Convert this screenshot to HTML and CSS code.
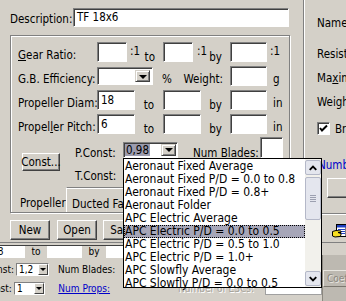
FILE: index.html
```html
<!DOCTYPE html>
<html lang="en">
<head>
  <meta charset="UTF-8">
  <meta name="viewport" content="width=device-width, initial-scale=1.0">
  <title>Propeller</title>
  <link rel="stylesheet" href="styles.css">
</head>
<body>
  <div class="screen">
    <div class="dialog">
      <div class="left">
        <div class="desc-row">
          <span class="desc-lbl">Description:</span>
          <span class="field desc">TF 18x6</span>
        </div>
        <div class="group">
          <div class="row">
            <span class="lbl"><u>G</u>ear Ratio:</span>
            <span class="field w30"></span>
            <span class="gap g36"><span class="sup">:1</span><span class="sub">to</span></span>
            <span class="field w30"></span>
            <span class="gap g37"><span class="sup">:1</span><span class="sub">by</span></span>
            <span class="field w37"></span>
            <span class="unit sup">:1</span>
          </div>
          <div class="row">
            <span class="lbl">G.B. Efficiency:</span>
            <span class="combo w56"><span class="combo-val"></span><span class="drop"></span></span>
            <span class="mid"><span>%</span><span>Weight:</span></span>
            <span class="field w37"></span>
            <span class="unit">g</span>
          </div>
          <div class="row">
            <span class="lbl">Propeller Diam:</span>
            <span class="field w38">18</span>
            <span class="gap g28"><span class="sub">to</span></span>
            <span class="field w38"></span>
            <span class="gap g29"><span class="sub">by</span></span>
            <span class="field w37"></span>
            <span class="unit">in</span>
          </div>
          <div class="row">
            <span class="lbl">Propel<u>l</u>er Pitch:</span>
            <span class="field w38">6</span>
            <span class="gap g28"><span class="sub">to</span></span>
            <span class="field w38"></span>
            <span class="gap g29"><span class="sub">by</span></span>
            <span class="field w37"></span>
            <span class="unit">in</span>
          </div>
          <div class="consts">
            <span class="btn const">Const...</span>
            <div class="const-col">
              <div class="pc-row">
                <span class="clbl">P.Const:</span>
                <span class="combo w55"><span class="combo-val"><span class="sel">0,98</span></span><span class="drop"></span></span>
                <span class="nb">Num Blades:</span>
                <span class="field nbf"></span>
              </div>
              <div class="tc-row"><span class="clbl">T.Const:</span></div>
            </div>
          </div>
          <div class="tabs">
            <span class="tab on">Propeller</span>
            <span class="tab">Ducted Fan</span>
          </div>
        </div>
        <div class="buttons">
          <span class="btn">New</span>
          <span class="btn">Open</span>
          <span class="btn">Save</span>
        </div>
      </div>
      <div class="right">
        <p class="rl name">Name:</p>
        <p class="rl resist">Resistance:</p>
        <p class="rl">Ma<u>x</u>imum Current:</p>
        <p class="rl">Weight:</p>
        <div class="chk">
          <span class="box">
            <svg width="9" height="9" viewBox="0 0 9 9"><polyline points="1,4 3,6.5 8,1.5" fill="none" stroke="#000" stroke-width="2"/></svg>
          </span>
          <span>Brushless</span>
        </div>
        <p class="link">Number of Cells</p>
        <span class="btn rbtn">Load</span>
        <div class="rsep"></div>
        <svg class="icon" width="15" height="17" viewBox="0 0 15 17">
          <rect x="4.5" y="1.5" width="9.5" height="12" fill="#fff" stroke="#000"/>
          <rect x="5" y="2" width="9" height="2.5" fill="#2040c0"/>
          <line x1="6" y1="6.5" x2="13" y2="6.5" stroke="#2040c0"/>
          <line x1="6" y1="8.5" x2="13" y2="8.5" stroke="#2040c0"/>
          <line x1="6" y1="10.5" x2="13" y2="10.5" stroke="#2040c0"/>
          <path d="M0.5 8.5 L4 7.5 L9 8 L9 9.5 L6 9.5 L9 10.5 L9 12 L8 13.5 L3 14 L0.5 13 Z" fill="#f8e020" stroke="#000"/>
        </svg>
      </div>
    </div>
    <div class="back">
      <div class="back-main">
        <div class="brow r1">
          <span class="bfield b1">18</span>
          <span class="bcell c23">to</span>
          <span class="bfield b34"></span>
          <span class="bcell c25">by</span>
          <span class="bfield b60"></span>
        </div>
        <div class="brow r2">
          <span class="bl">P.Const:</span>
          <span class="bcombo">1,2<span class="bdrop"></span></span>
          <span class="bt">Num Blades:</span>
          <span class="bfield b30"></span>
        </div>
        <div class="brow r3">
          <span class="bl">T.Const:</span>
          <span class="bcombo">1<span class="bdrop"></span></span>
          <span class="blink">Num Props:</span>
          <span class="grey">Number of ESCs:</span>
          <span class="bfield b60"></span>
        </div>
      </div>
      <div class="back-side">
        <span class="coeff">Coefficients</span>
      </div>
    </div>
    <div class="droplist">
      <div class="items">
        <div class="item">Aeronaut Fixed Average</div>
        <div class="item">Aeronaut Fixed P/D = 0.0 to 0.8</div>
        <div class="item">Aeronaut Fixed P/D = 0.8+</div>
        <div class="item">Aeronaut Folder</div>
        <div class="item">APC Electric Average</div>
        <div class="item current">APC Electric P/D = 0.0 to 0.5</div>
        <div class="item">APC Electric P/D = 0.5 to 1.0</div>
        <div class="item">APC Electric P/D = 1.0+</div>
        <div class="item">APC Slowfly Average</div>
        <div class="item">APC Slowfly P/D = 0.0 to 0.5</div>
      </div>
      <div class="sbar">
        <span class="sb-btn">
          <svg width="15" height="14" viewBox="0 0 15 14"><polyline points="4,9 7.5,5.5 11,9" fill="none" stroke="#000" stroke-width="2"/></svg>
        </span>
        <span class="thumb"><span class="grip"></span></span>
        <span class="sb-btn down">
          <svg width="15" height="14" viewBox="0 0 15 14"><polyline points="4,5 7.5,8.5 11,5" fill="none" stroke="#000" stroke-width="2"/></svg>
        </span>
      </div>
    </div>
  </div>
</body>
</html>
```

FILE: styles.css
```css
* {
  padding: 0;
  margin: 0;
  box-sizing: border-box;
}
html, body {
  width: 346px;
  height: 301px;
  overflow: hidden;
}
body {
  background: #d4d0c8;
  color: #000;
  font: 11.5px/14px "DejaVu Sans Condensed", "DejaVu Sans", sans-serif;
  font-stretch: condensed;
}

.screen {
  position: relative;
  width: 346px;
  height: 301px;
  overflow: hidden;
  white-space: nowrap;
}
.dialog {
  display: flex;
  height: 242px;
}
.left {
  width: 303px;
}

/* classic sunken / raised bits */
.field {
  display: block;
  height: 20px;
  padding: 2px 0 0 3px;
  background: #fff;
  border: 1px solid;
  border-color: #808080 #fff #fff #808080;
  box-shadow: inset 1px 1px #404040;
}
.btn {
  display: flex;
  align-items: center;
  justify-content: center;
  background: #d4d0c8;
  border: 1px solid;
  border-color: #fff #404040 #404040 #fff;
  box-shadow: inset -1px -1px #808080;
}
.combo {
  display: flex;
  height: 18px;
  padding: 2px;
  background: #fff;
  border: 1px solid;
  border-color: #808080 #fff #fff #808080;
  box-shadow: inset 1px 1px #404040;
}
.combo-val {
  flex: 1;
  line-height: 12px;
}
.drop {
  position: relative;
  width: 15px;
  background: #d4d0c8;
  border: 1px solid;
  border-color: #d4d0c8 #404040 #404040 #d4d0c8;
  box-shadow: inset 1px 1px #fff, inset -1px -1px #808080;
}
.drop::after {
  content: "";
  position: absolute;
  left: 3px;
  top: 4px;
  border-top: 4px solid #000;
  border-left: 4px solid transparent;
  border-right: 4px solid transparent;
}

.w30 { width: 30px; }
.w37 { width: 37px; }
.w38 { width: 38px; }
.w55 { width: 55px; }
.w56 { width: 56px; }

/* description */
.desc-row {
  display: flex;
  align-items: center;
  padding: 8px 0 0 10px;
}
.desc-lbl {
  width: 63px;
  margin-top: 3px;
}
.desc {
  width: 216px;
  height: 19px;
  padding-top: 1px;
}

/* group box */
.group {
  display: flex;
  flex-direction: column;
  width: 280px;
  height: 178px;
  margin: 8px 0 0 10px;
  padding: 6px 0 0 7px;
  border: 1px solid #808080;
  box-shadow: inset 1px 1px #fff, 1px 1px #fff;
}
.row {
  display: flex;
  height: 20px;
  margin-bottom: 4px;
}
.lbl {
  width: 79px;
  align-self: flex-end;
  margin-bottom: 0;
}
.gap {
  display: flex;
  justify-content: center;
}
.g36, .g37 { justify-content: space-between; padding: 0 8px 0 3px; }
.g36 { width: 36px; }
.g37 { width: 37px; padding-left: 4px; }
.g28 { width: 28px; }
.g29 { width: 29px; }
.sup {
  align-self: flex-start;
  margin-top: 2px;
}
.sub {
  align-self: flex-end;
  margin-bottom: -2px;
}
.unit {
  margin-left: 6px;
  align-self: flex-end;
  margin-bottom: 0;
}
.unit.sup {
  margin-left: 3px;
  align-self: flex-start;
}
.row .combo {
  align-self: center;
}
.mid {
  display: flex;
  justify-content: space-between;
  width: 77px;
  padding: 0 7px 0 9px;
  align-self: flex-end;
  margin-bottom: 0;
}

/* constants */
.consts {
  display: flex;
  margin-top: -1px;
  height: 50px;
}
.const {
  width: 38px;
  height: 18px;
  margin: 16px 0 0 4px;
}
.const-col {
  margin-left: 15px;
}
.pc-row {
  display: flex;
  align-items: flex-end;
  height: 21px;
}
.clbl {
  width: 48px;
  margin-bottom: -2px;
}
.pc-row .combo {
  height: 16px;
  padding: 1px;
}
.sel {
  display: inline-block;
  padding: 0 1px;
  background: #9c9cae;
}
.pc-row .drop::after {
  top: 3px;
}
.nb {
  margin: 0 0 -2px 15px;
  width: 67px;
}
.nbf {
  width: 23px;
  height: 21px;
}
.tc-row {
  margin-top: 11px;
}

/* tabs */
.tabs {
  display: flex;
  margin: auto 0 0 -7px;
  height: 25px;
}
.tab {
  padding: 9px 0 0 9px;
  width: 55px;
}
.tab + .tab {
  width: 90px;
  padding-left: 5px;
  border-top: 1px solid #808080;
  border-left: 1px solid #fff;
  box-shadow: inset 0 1px #fff;
}

.buttons {
  display: flex;
  gap: 7px;
  margin: 7px 0 0 10px;
}
.buttons .btn {
  width: 40px;
  height: 20px;
}
.buttons .btn:last-child {
  margin-left: -1px;
}

/* right panel */
.right {
  width: 43px;
  overflow: hidden;
  padding: 16px 0 0 13px;
  border-left: 1px solid #808080;
  box-shadow: inset 1px 0 #fff;
}
.rl {
  margin-bottom: 10px;
}
.name {
  margin-bottom: 17px;
}
.chk {
  display: flex;
  align-items: center;
  gap: 5px;
  margin-top: 13px;
  height: 13px;
}
.box {
  display: flex;
  align-items: center;
  justify-content: center;
  flex: none;
  width: 13px;
  height: 13px;
  background: #fff;
  border: 1px solid;
  border-color: #808080 #fff #fff #808080;
  box-shadow: inset 1px 1px #404040;
}
.link {
  margin: 23px 0 0 1px;
  color: #0000c8;
}
.rbtn {
  width: 40px;
  height: 20px;
  margin: 6px 0 0 10px;
  color: #d4d0c8;
}
.rsep {
  height: 2px;
  margin: 15px 0 0 -13px;
  border-top: 1px solid #808080;
  border-bottom: 1px solid #fff;
}
.icon {
  display: block;
  margin: 8px 0 0 15px;
}

/* window behind */
.back {
  display: flex;
  height: 59px;
  border-top: 1px solid #808080;
  font-size: 10px;
  line-height: 12px;
}
.back-main {
  width: 322px;
  padding-top: 2px;
}
.brow {
  display: flex;
  align-items: center;
}
.r1 {
  height: 13px;
  border-top: 1px solid #404040;
  background: #fff;
}
.r2 {
  margin-top: 5px;
  height: 13px;
}
.r3 {
  margin-top: 6px;
  height: 13px;
}
.bfield {
  height: 12px;
  background: #fff;
  padding-left: 2px;
}
.b1 { width: 35px; margin-left: -10px; }
.b30 { width: 30px; margin-left: 11px; border: 1px solid #808080; }
.b34 { width: 34px; }
.b60 { width: 60px; }
.bcell {
  height: 12px;
  background: #d4d0c8;
  text-align: center;
  border-right: 1px solid #fff;
}
.c23 { width: 23px; }
.c25 { width: 25px; }
.bl {
  width: 40px;
  margin-left: -26px;
  text-align: right;
}
.bcombo {
  position: relative;
  width: 33px;
  height: 13px;
  margin-left: 2px;
  padding-left: 2px;
  background: #fff;
  border: 1px solid;
  border-color: #808080 #fff #fff #808080;
}
.bdrop {
  position: absolute;
  right: 0;
  top: 0;
  width: 10px;
  height: 11px;
  background: #d4d0c8;
  border: 1px solid;
  border-color: #fff #404040 #404040 #fff;
}
.bdrop::after {
  content: "";
  position: absolute;
  left: 1px;
  top: 3px;
  border-top: 3px solid #000;
  border-left: 3px solid transparent;
  border-right: 3px solid transparent;
}
.bt {
  margin-left: 9px;
}
.blink {
  margin-left: 13px;
  color: #0000c8;
  text-decoration: underline;
}
.grey {
  margin-left: 68px;
  color: #a8a49c;
  text-shadow: 1px 1px #fff;
}
.back-main .r3 .b60 {
  margin-left: 11px;
  border: 1px solid #a0a0a0;
}
.back-side {
  flex: 1;
  margin-top: 12px;
  padding-top: 15px;
  background: #bdb9b1;
  border-left: 1px solid #8c8880;
}
.coeff {
  display: block;
  height: 17px;
  padding: 2px 0 0 3px;
  color: #8c8880;
  text-shadow: 1px 1px #e8e6e0;
  border: 1px solid;
  border-color: #e8e6e0 #7c7870 #7c7870 #e8e6e0;
}

/* open drop-down list */
.droplist {
  position: absolute;
  left: 123px;
  top: 158px;
  width: 199px;
  height: 130px;
  display: flex;
  background: #fff;
  border: 1px solid #000;
}
.items {
  width: 181px;
  padding-top: 1px;
  font-size: 12px;
}
.item {
  height: 13px;
  line-height: 13px;
  padding-left: 1px;
}
.current {
  background: #a6a6b8;
  outline: 1px dotted #000;
  outline-offset: -1px;
}
.sbar {
  display: flex;
  flex-direction: column;
  width: 16px;
  padding: 1px 0;
  background: #f2f1ec;
}
.sb-btn, .thumb {
  display: flex;
  align-items: center;
  justify-content: center;
  height: 15px;
  background: #e4e6ee;
  border: 1px solid #b4b8c8;
  border-radius: 2px;
}
.thumb {
  height: 43px;
  margin-top: 2px;
}
.grip {
  width: 6px;
  height: 7px;
  background: repeating-linear-gradient(#9ca0b0 0 1px, transparent 1px 2px);
}
.down {
  margin-top: auto;
}
```
